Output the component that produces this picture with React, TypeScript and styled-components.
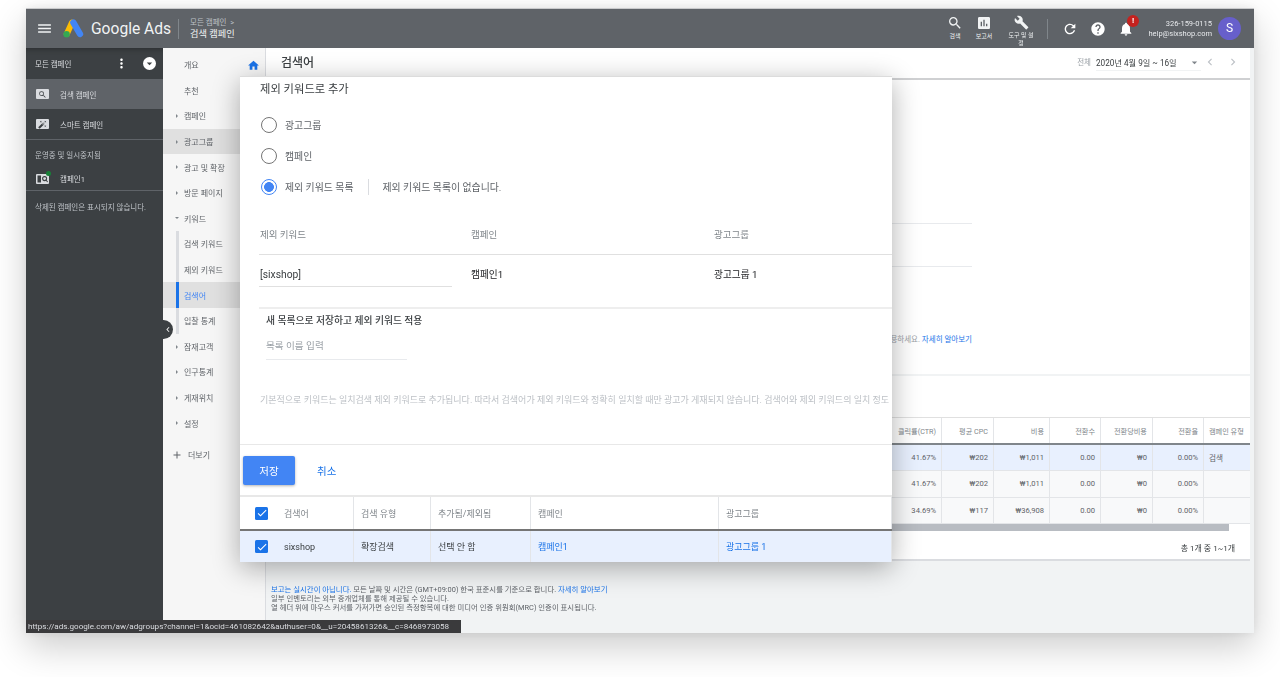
import styled, { createGlobalStyle } from 'styled-components';
import {
  MdMenu,
  MdSearch,
  MdAssessment,
  MdBuild,
  MdRefresh,
  MdHelp,
  MdNotifications,
  MdHome,
  MdMoreVert,
  MdArrowDropDown,
  MdChevronLeft,
  MdChevronRight,
  MdAdd,
  MdCheck,
  MdAutoFixHigh,
} from 'react-icons/md';

const navItems = [
  { label: '개요', kind: 'plain' },
  { label: '추천', kind: 'plain' },
  { label: '캠페인', kind: 'closed' },
  { label: '광고그룹', kind: 'closed', selected: true },
  { label: '광고 및 확장', kind: 'closed' },
  { label: '방문 페이지', kind: 'closed' },
  { label: '키워드', kind: 'open' },
  { label: '검색 키워드', kind: 'sub' },
  { label: '제외 키워드', kind: 'sub' },
  { label: '검색어', kind: 'sub', active: true },
  { label: '입찰 통계', kind: 'sub' },
  { label: '잠재고객', kind: 'closed' },
  { label: '인구통계', kind: 'closed' },
  { label: '게재위치', kind: 'closed' },
  { label: '설정', kind: 'closed' },
];

const statColumns = ['클릭률(CTR)', '평균 CPC', '비용', '전환수', '전환당비용', '전환율', '캠페인 유형'];
const statRows = [
  ['41.67%', '₩202', '₩1,011', '0.00', '₩0', '0.00%', '검색'],
  ['41.67%', '₩202', '₩1,011', '0.00', '₩0', '0.00%', ''],
  ['34.69%', '₩117', '₩36,908', '0.00', '₩0', '0.00%', ''],
];

const App = () => {
  return (
    <>
      <GlobalStyle />
      <Frame>
        <Header>
          <MenuButton>
            <MdMenu size={17} />
          </MenuButton>
          <svg width="21" height="19" viewBox="0 0 21 19">
            <path d="M3.8 15 L9 3.6" stroke="#fbbc04" strokeWidth="6" strokeLinecap="round" />
            <path d="M10.4 3.6 L17 15" stroke="#4285f4" strokeWidth="6.4" strokeLinecap="round" />
            <circle cx="3.6" cy="15.2" r="3.2" fill="#34a853" />
          </svg>
          <Brand>Google Ads</Brand>
          <Crumbs>
            <CrumbTop>모든 캠페인 &nbsp;&gt;</CrumbTop>
            <CrumbMain>검색 캠페인</CrumbMain>
          </Crumbs>
          <HeaderTools>
            <ToolButton $width={28}>
              <MdSearch size={16} />
              <ToolLabel>검색</ToolLabel>
            </ToolButton>
            <ToolButton $width={30}>
              <MdAssessment size={16} />
              <ToolLabel>보고서</ToolLabel>
            </ToolButton>
            <ToolButton $width={44}>
              <MdBuild size={17} />
              <ToolLabel>도구 및 설정</ToolLabel>
            </ToolButton>
            <ToolDivider />
            <RoundIcon>
              <MdRefresh size={16} />
            </RoundIcon>
            <RoundIcon>
              <MdHelp size={16} />
            </RoundIcon>
            <RoundIcon>
              <MdNotifications size={16} />
              <AlertBadge>!</AlertBadge>
            </RoundIcon>
            <Account>
              <span>326-159-0115</span>
              <span>help@sixshop.com</span>
            </Account>
            <Avatar>S</Avatar>
          </HeaderTools>
        </Header>

        <Body>
          <Sidebar>
            <SideHead>
              모든 캠페인
              <SideHeadIcons>
                <MdMoreVert size={15} />
                <SideCircle>
                  <MdArrowDropDown size={13} />
                </SideCircle>
              </SideHeadIcons>
            </SideHead>
            <SideRow $selected>
              <SideIcon>
                <MdSearch size={9} />
              </SideIcon>
              검색 캠페인
            </SideRow>
            <SideRow $divided>
              <SideIcon>
                <MdAutoFixHigh size={9} />
              </SideIcon>
              스마트 캠페인
            </SideRow>
            <SideCaption>운영중 및 일시중지됨</SideCaption>
            <SideCampaign>
              <SideIcon>
                <svg width="13" height="10" viewBox="0 0 13 10">
                  <rect x="1.5" y="1.5" width="3.5" height="7" fill="#3c4043" />
                  <circle cx="8.6" cy="4.6" r="2" fill="none" stroke="#3c4043" strokeWidth="1.1" />
                  <path d="M10 6 L11.6 8" stroke="#3c4043" strokeWidth="1.1" />
                </svg>
                <GreenDot />
              </SideIcon>
              캠페인1
            </SideCampaign>
            <SideNote>삭제된 캠페인은 표시되지 않습니다.</SideNote>
          </Sidebar>

          <Nav>
            {navItems.map((item) => (
              <NavRow key={item.label} $selected={item.selected || item.active}>
                {item.kind === 'sub' && <NavBar $active={item.active} />}
                {(item.kind === 'closed' || item.kind === 'open') && <NavCaret $open={item.kind === 'open'} />}
                <NavText $active={item.active}>{item.label}</NavText>
                {item.label === '개요' && (
                  <HomeMark>
                    <MdHome size={13} />
                  </HomeMark>
                )}
              </NavRow>
            ))}
            <NavMore>
              <MdAdd size={12} />
              더보기
            </NavMore>
          </Nav>

          <Main>
            <TitleBar>
              <PageTitle>검색어</PageTitle>
              <DateBox>
                <DateScope>전체</DateScope>
                <DateField>
                  2020년 4월 9일 ~ 16일
                  <MdArrowDropDown size={13} />
                </DateField>
                <DateArrows>
                  <MdChevronLeft size={14} />
                  <MdChevronRight size={14} />
                </DateArrows>
              </DateBox>
            </TitleBar>

            <Card>
              <ChartArea>
                <ChartLine $gap={42} />
                <ChartLine $gap={68} />
                <ChartHint>
                  키워드 아이디어를 활용하세요. <Link>자세히 알아보기</Link>
                </ChartHint>
              </ChartArea>
              <TableGap />
              <StatHead>
                <StatBlank />
                {statColumns.map((col, i) => (
                  <StatCell key={col} $left={i === 6} $muted>
                    {col}
                  </StatCell>
                ))}
              </StatHead>
              {statRows.map((row, r) => (
                <StatRow key={r} $first={r === 0}>
                  <StatBlank />
                  {row.map((value, i) => (
                    <StatCell key={i} $left={i === 6}>
                      {value}
                    </StatCell>
                  ))}
                </StatRow>
              ))}
              <ScrollTrack>
                <ScrollThumb />
              </ScrollTrack>
              <Pager>총 1개 중 1~1개</Pager>
            </Card>

            <Notes>
              <NoteLine>
                <Link>보고는 실시간이 아닙니다.</Link> 모든 날짜 및 시간은 (GMT+09:00) 한국 표준시를 기준으로 합니다.{' '}
                <Link>자세히 알아보기</Link>
              </NoteLine>
              <NoteLine>일부 인벤토리는 외부 중개업체를 통해 제공될 수 있습니다.</NoteLine>
              <NoteLine>열 헤더 위에 마우스 커서를 가져가면 승인된 측정항목에 대한 미디어 인증 위원회(MRC) 인증이 표시됩니다.</NoteLine>
            </Notes>
          </Main>
        </Body>

        <CollapseTab>
          <MdChevronLeft size={13} />
        </CollapseTab>

        <Dialog>
          <DialogTitle>제외 키워드로 추가</DialogTitle>
          <RadioList>
            <RadioRow>
              <Radio />
              광고그룹
            </RadioRow>
            <RadioRow>
              <Radio />
              캠페인
            </RadioRow>
            <RadioRow>
              <Radio $checked />
              제외 키워드 목록
              <RadioDivider />
              제외 키워드 목록이 없습니다.
            </RadioRow>
          </RadioList>

          <KeywordHead>
            <KeywordCol $width={211}>제외 키워드</KeywordCol>
            <KeywordCol $width={243}>캠페인</KeywordCol>
            <KeywordCol>광고그룹</KeywordCol>
          </KeywordHead>
          <KeywordRow>
            <KeywordInput>[sixshop]</KeywordInput>
            <KeywordValue $width={243}>캠페인1</KeywordValue>
            <KeywordValue>광고그룹 1</KeywordValue>
          </KeywordRow>

          <NewList>
            <NewListTitle>새 목록으로 저장하고 제외 키워드 적용</NewListTitle>
            <NewListInput>목록 이름 입력</NewListInput>
          </NewList>

          <MatchNote>
            기본적으로 키워드는 일치검색 제외 키워드로 추가됩니다. 따라서 검색어가 제외 키워드와 정확히 일치할 때만 광고가 게재되지 않습니다. 검색어와 제외 키워드의 일치 정도
          </MatchNote>

          <Actions>
            <SaveButton>저장</SaveButton>
            <CancelButton>취소</CancelButton>
          </Actions>

          <TermHead>
            <CheckCell>
              <CheckBox>
                <MdCheck size={12} />
              </CheckBox>
            </CheckCell>
            <TermCell $width={77}>검색어</TermCell>
            <TermCell $width={77}>검색 유형</TermCell>
            <TermCell $width={100}>추가됨/제외됨</TermCell>
            <TermCell $width={188}>캠페인</TermCell>
            <TermCell>광고그룹</TermCell>
          </TermHead>
          <TermRow>
            <CheckCell>
              <CheckBox>
                <MdCheck size={12} />
              </CheckBox>
            </CheckCell>
            <TermCell $width={77} $dark>
              sixshop
            </TermCell>
            <TermCell $width={77} $dark>
              확장검색
            </TermCell>
            <TermCell $width={100} $dark>
              선택 안 함
            </TermCell>
            <TermCell $width={188} $link>
              캠페인1
            </TermCell>
            <TermCell $link>광고그룹 1</TermCell>
          </TermRow>
        </Dialog>

        <StatusTip>https://ads.google.com/aw/adgroups?channel=1&amp;ocid=461082642&amp;authuser=0&amp;__u=2045861326&amp;__c=8468973058</StatusTip>
      </Frame>
    </>
  );
};

export default App;

const GlobalStyle = createGlobalStyle`
  html, body {
    margin: 0;
    height: 677px;
    overflow: hidden;
    background: #ffffff;
  }
  body {
    font-family: Roboto, "Noto Sans CJK KR", sans-serif;
  }
  * {
    box-sizing: border-box;
  }
`;

const Frame = styled.div`
  position: relative;
  margin: 8px 26px 0;
  width: 1228px;
  height: 625px;
  display: flex;
  flex-direction: column;
  background: #f1f3f4;
  box-shadow: 0 14px 34px rgba(0, 0, 0, 0.2), 0 0 10px rgba(0, 0, 0, 0.08);
  filter: blur(0.4px);
`;

const Header = styled.header`
  height: 40px;
  flex: none;
  display: flex;
  align-items: center;
  background: #5f6368;
  color: #ffffff;
  border-top: 1px solid #c9cacc;
`;

const MenuButton = styled.div`
  width: 37px;
  display: flex;
  justify-content: center;
  color: #f1f3f4;
`;

const Brand = styled.div`
  margin-left: 7px;
  font-size: 15.6px;
  color: #f1f3f4;
  white-space: nowrap;
`;

const Crumbs = styled.div`
  margin-left: 7px;
  padding-left: 11px;
  height: 20px;
  display: flex;
  flex-direction: column;
  justify-content: center;
  border-left: 1px solid #80868b;
`;

const CrumbTop = styled.div`
  font-size: 7.5px;
  line-height: 10px;
  color: #bdc1c6;
`;

const CrumbMain = styled.div`
  font-size: 9.2px;
  line-height: 12px;
  color: #f1f3f4;
`;

const HeaderTools = styled.div`
  margin-left: auto;
  padding-right: 13px;
  display: flex;
  align-items: center;
`;

const ToolButton = styled.div<{ $width: number }>`
  width: ${(p) => p.$width}px;
  height: 36px;
  display: flex;
  flex-direction: column;
  align-items: center;
  padding-top: 4px;
  color: #f1f3f4;
`;

const ToolLabel = styled.div`
  margin-top: 1px;
  font-size: 6px;
  line-height: 8px;
  text-align: center;
  width: 28px;
`;

const ToolDivider = styled.div`
  width: 1px;
  height: 20px;
  margin: 0 8px 0 4px;
  background: #80868b;
`;

const RoundIcon = styled.div`
  position: relative;
  width: 28px;
  display: flex;
  justify-content: center;
  color: #ffffff;
`;

const AlertBadge = styled.div`
  position: absolute;
  top: -6px;
  right: 1px;
  width: 12px;
  height: 12px;
  border-radius: 50%;
  background: #c5221f;
  font-size: 8px;
  font-weight: 700;
  line-height: 12px;
  text-align: center;
`;

const Account = styled.div`
  margin-left: -1px;
  width: 73px;
  display: flex;
  flex-direction: column;
  align-items: flex-end;
  font-size: 7.5px;
  line-height: 9.5px;
  color: #e8eaed;
  white-space: nowrap;
`;

const Avatar = styled.div`
  margin-left: 6px;
  width: 23px;
  height: 23px;
  border-radius: 50%;
  background: #675fcb;
  font-size: 12px;
  line-height: 23px;
  text-align: center;
`;

const Body = styled.div`
  flex: 1;
  min-height: 0;
  display: flex;
`;

const Sidebar = styled.aside`
  width: 137px;
  flex: none;
  background: #3c4043;
  color: #bdc1c6;
  font-size: 7.5px;
`;

const SideHead = styled.div`
  height: 31px;
  padding: 0 7px 0 9px;
  display: flex;
  align-items: center;
  justify-content: space-between;
  color: #dadce0;
  box-shadow: inset 0 6px 6px -6px rgba(0, 0, 0, 0.4);
`;

const SideHeadIcons = styled.div`
  display: flex;
  align-items: center;
  gap: 14px;
  color: #ffffff;
`;

const SideCircle = styled.div`
  width: 13px;
  height: 13px;
  border-radius: 50%;
  background: #ffffff;
  color: #3c4043;
  display: flex;
  align-items: center;
  justify-content: center;
`;

const SideRow = styled.div<{ $selected?: boolean; $divided?: boolean }>`
  height: ${(p) => (p.$selected ? 30 : 31)}px;
  padding-left: 10px;
  display: flex;
  align-items: center;
  gap: 11px;
  color: #dadce0;
  background: ${(p) => (p.$selected ? '#5f6368' : 'transparent')};
  border-bottom: ${(p) => (p.$divided ? '1px solid #5f6368' : 'none')};
`;

const SideIcon = styled.div`
  position: relative;
  width: 13px;
  height: 10px;
  display: flex;
  align-items: center;
  justify-content: center;
  background: #dadce0;
  color: #3c4043;
  border-radius: 1px;
`;

const GreenDot = styled.div`
  position: absolute;
  top: -3px;
  right: -2px;
  width: 5px;
  height: 5px;
  border-radius: 50%;
  background: #188038;
`;

const SideCaption = styled.div`
  height: 27px;
  padding: 9px 0 0 9px;
  font-size: 7.5px;
`;

const SideCampaign = styled.div`
  height: 24px;
  padding-left: 10px;
  display: flex;
  align-items: center;
  gap: 11px;
  color: #dadce0;
  border-bottom: 1px solid #5f6368;
`;

const SideNote = styled.div`
  padding: 10px 0 0 9px;
  font-size: 7.5px;
  white-space: nowrap;
`;

const Nav = styled.nav`
  width: 103px;
  flex: none;
  padding-top: 4px;
  background: #f6f6f6;
  border-right: 1px solid #dadce0;
`;

const NavRow = styled.div<{ $selected?: boolean }>`
  position: relative;
  height: 25.6px;
  display: flex;
  align-items: center;
  padding-left: 21px;
  background: ${(p) => (p.$selected ? '#e0e0e0' : 'transparent')};
`;

const NavBar = styled.div<{ $active?: boolean }>`
  position: absolute;
  left: 13px;
  top: 0;
  bottom: 0;
  width: 2.5px;
  background: ${(p) => (p.$active ? '#1a73e8' : '#dadce0')};
`;

const NavCaret = styled.div<{ $open: boolean }>`
  position: absolute;
  left: ${(p) => (p.$open ? 12 : 13)}px;
  top: 11px;
  width: 0;
  height: 0;
  ${(p) =>
    p.$open
      ? 'border-left: 2px solid transparent; border-right: 2px solid transparent; border-top: 2.5px solid #80868b;'
      : 'border-top: 2px solid transparent; border-bottom: 2px solid transparent; border-left: 2.5px solid #80868b;'}
`;

const NavText = styled.span<{ $active?: boolean }>`
  font-size: 8px;
  color: ${(p) => (p.$active ? '#4285f4' : '#5f6368')};
  white-space: nowrap;
`;

const HomeMark = styled.div`
  position: absolute;
  left: 84px;
  top: 7px;
  color: #1a73e8;
  display: flex;
`;

const NavMore = styled.div`
  margin-top: 13px;
  margin-left: 8px;
  display: flex;
  align-items: center;
  gap: 5px;
  font-size: 8px;
  color: #5f6368;
`;

const Main = styled.main`
  flex: 1;
  min-width: 0;
  display: flex;
  flex-direction: column;
`;

const TitleBar = styled.div`
  height: 32px;
  flex: none;
  padding: 0 10px 0 15px;
  display: flex;
  align-items: center;
  justify-content: space-between;
  background: #ffffff;
  border-bottom: 2px solid #cfd0d2;
  margin-right: 4px;
`;

const PageTitle = styled.h1`
  margin: 0 0 4px;
  font-size: 12px;
  font-weight: 500;
  color: #3c4043;
`;

const DateBox = styled.div`
  display: flex;
  align-items: center;
  margin-bottom: 4px;
`;

const DateScope = styled.span`
  font-size: 7.5px;
  color: #9aa0a6;
  margin-right: 5px;
`;

const DateField = styled.div`
  width: 105px;
  height: 17px;
  display: flex;
  align-items: center;
  justify-content: space-between;
  font-size: 8.2px;
  color: #3c4043;
  border-bottom: 1px solid #f1f3f4;
  margin-top: 3px;
  svg {
    color: #80868b;
  }
`;

const DateArrows = styled.div`
  margin: 2px 0 0 2px;
  display: flex;
  gap: 9px;
  color: #bdc1c6;
`;

const Card = styled.section`
  flex: none;
  margin-right: 4px;
  background: #ffffff;
  border-bottom: 2px solid #dadce0;
  height: 481px;
`;

const ChartArea = styled.div`
  height: 296px;
  padding-top: 143px;
  border-bottom: 2px solid #f1f3f4;
`;

const ChartLine = styled.div<{ $gap: number }>`
  width: 706px;
  height: 1px;
  background: #e8eaed;
  margin-bottom: ${(p) => p.$gap}px;
`;

const ChartHint = styled.div`
  width: 706px;
  text-align: right;
  font-size: 7.5px;
  line-height: 9px;
  color: #9aa0a6;
`;

const Link = styled.span`
  color: #1a73e8;
`;

const TableGap = styled.div`
  height: 42px;
  border-bottom: 1px solid #e0e0e0;
`;

const statGrid = '626px 50px 52px 56px 51px 52px 51px 46px';

const StatHead = styled.div`
  display: grid;
  grid-template-columns: ${statGrid};
  height: 27px;
  border-bottom: 2px solid #80868b;
`;

const StatRow = styled.div<{ $first?: boolean }>`
  display: grid;
  grid-template-columns: ${statGrid};
  height: 26.3px;
  background: ${(p) => (p.$first ? '#e8f0fe' : '#f8f9fa')};
  border-bottom: 1px solid #e3e5e8;
`;

const StatBlank = styled.div``;

const StatCell = styled.div<{ $left?: boolean; $muted?: boolean }>`
  display: flex;
  align-items: center;
  justify-content: ${(p) => (p.$left ? 'flex-start' : 'flex-end')};
  padding: 0 5px;
  font-size: ${(p) => (p.$muted ? 7.2 : 7.6)}px;
  color: ${(p) => (p.$muted ? '#80868b' : '#5f6368')};
  border-right: ${(p) => (p.$left ? 'none' : '1px solid #e3e5e8')};
  white-space: nowrap;
  overflow: hidden;
`;

const ScrollTrack = styled.div`
  height: 7px;
`;

const ScrollThumb = styled.div`
  width: 963px;
  height: 7px;
  background: #b8bcc2;
`;

const Pager = styled.div`
  padding: 11px 15px 0 0;
  text-align: right;
  font-size: 8px;
  color: #3c4043;
`;

const Notes = styled.div`
  padding: 24px 0 0 5px;
`;

const NoteLine = styled.div`
  font-size: 7.4px;
  line-height: 9.2px;
  color: #5f6368;
  white-space: nowrap;
`;

const CollapseTab = styled.div`
  position: absolute;
  left: 137px;
  top: 312px;
  width: 10px;
  height: 19px;
  border-radius: 0 10px 10px 0;
  background: #3c4043;
  color: #ffffff;
  display: flex;
  align-items: center;
  justify-content: center;
`;

const Dialog = styled.div`
  position: absolute;
  left: 214px;
  top: 68px;
  width: 652px;
  height: 486px;
  background: #ffffff;
  border-top: 1px solid #dcdcdc;
  box-shadow: 0 6px 26px rgba(0, 0, 0, 0.32);
  overflow: hidden;
`;

const DialogTitle = styled.h2`
  margin: 0;
  padding: 6px 0 0 20px;
  height: 32px;
  font-size: 11.3px;
  line-height: 14px;
  font-weight: 400;
  color: #3c4043;
`;

const RadioList = styled.div`
  padding-left: 21px;
  display: flex;
  flex-direction: column;
`;

const RadioRow = styled.div`
  height: 31px;
  display: flex;
  align-items: center;
  font-size: 9.9px;
  color: #5f6368;
  white-space: nowrap;
`;

const Radio = styled.span<{ $checked?: boolean }>`
  flex: none;
  width: 16px;
  height: 16px;
  margin-right: 8px;
  border-radius: 50%;
  border: 1.5px solid ${(p) => (p.$checked ? '#4285f4' : '#757575')};
  background: ${(p) => (p.$checked ? 'radial-gradient(circle, #4285f4 0 4.6px, #ffffff 5.2px)' : '#ffffff')};
`;

const RadioDivider = styled.span`
  width: 1px;
  height: 16px;
  margin: 0 14px;
  background: #dadce0;
`;

const KeywordHead = styled.div`
  margin-left: 19px;
  margin-top: 11px;
  height: 42px;
  display: flex;
  align-items: center;
  border-bottom: 1px solid #e0e0e0;
`;

const KeywordCol = styled.div<{ $width?: number }>`
  width: ${(p) => (p.$width ? `${p.$width}px` : 'auto')};
  padding-left: 1px;
  font-size: 9.5px;
  color: #80868b;
`;

const KeywordRow = styled.div`
  margin-left: 19px;
  height: 54px;
  display: flex;
  align-items: flex-start;
  border-bottom: 2px solid #eeeeee;
`;

const KeywordInput = styled.div`
  width: 193px;
  margin-right: 18px;
  height: 32px;
  padding: 13px 0 0 1px;
  font-size: 10.3px;
  color: #3c4043;
  border-bottom: 1px solid #e0e0e0;
`;

const KeywordValue = styled.div<{ $width?: number }>`
  width: ${(p) => (p.$width ? `${p.$width}px` : 'auto')};
  padding: 12px 0 0 1px;
  font-size: 9.7px;
  color: #202124;
`;

const NewList = styled.div`
  padding: 5px 0 0 26px;
`;

const NewListTitle = styled.div`
  font-size: 9.8px;
  line-height: 13px;
  font-weight: 500;
  color: #3c4043;
`;

const NewListInput = styled.div`
  width: 141px;
  height: 28px;
  margin-top: 5px;
  padding-top: 6px;
  font-size: 9.6px;
  color: #9aa0a6;
  border-bottom: 1px solid #e8eaed;
`;

const MatchNote = styled.div`
  margin: 33px 0 0 20px;
  font-size: 9px;
  line-height: 14px;
  color: #bdc1c6;
  white-space: nowrap;
`;

const Actions = styled.div`
  margin-top: 37px;
  height: 53px;
  padding-left: 3px;
  display: flex;
  align-items: center;
  border-top: 1px solid #e8e8e8;
  border-bottom: 2px solid #e8e8e8;
`;

const SaveButton = styled.button`
  width: 52px;
  height: 29px;
  border: none;
  border-radius: 2px;
  background: #4285f4;
  color: #ffffff;
  font-family: inherit;
  font-size: 10.5px;
  box-shadow: 0 1px 3px rgba(0, 0, 0, 0.3);
`;

const CancelButton = styled.button`
  margin-left: 22px;
  padding: 0;
  border: none;
  background: none;
  color: #1a73e8;
  font-family: inherit;
  font-size: 10.5px;
`;

const TermHead = styled.div`
  height: 34px;
  display: flex;
  border-bottom: 2px solid #757575;
`;

const TermRow = styled.div`
  height: 31px;
  display: flex;
  background: #e8f0fe;
`;

const CheckCell = styled.div`
  width: 37px;
  flex: none;
  display: flex;
  align-items: center;
  padding-left: 15px;
`;

const CheckBox = styled.span`
  width: 13px;
  height: 13px;
  border-radius: 1.5px;
  background: #1a73e8;
  color: #ffffff;
  display: flex;
  align-items: center;
  justify-content: center;
`;

const TermCell = styled.div<{ $width?: number; $dark?: boolean; $link?: boolean }>`
  width: ${(p) => (p.$width ? `${p.$width}px` : 'auto')};
  flex: ${(p) => (p.$width ? 'none' : 1)};
  padding-left: 7px;
  display: flex;
  align-items: center;
  font-size: 9px;
  color: ${(p) => (p.$link ? '#1a73e8' : p.$dark ? '#3c4043' : '#80868b')};
  border-right: 1px solid #e3e5e8;
  white-space: nowrap;
`;

const StatusTip = styled.div`
  position: absolute;
  left: 0;
  bottom: 0;
  width: 435px;
  height: 13px;
  padding-left: 2px;
  background: #3a3a3c;
  color: #dadce0;
  font-size: 8.1px;
  line-height: 13px;
  white-space: nowrap;
  overflow: hidden;
`;
